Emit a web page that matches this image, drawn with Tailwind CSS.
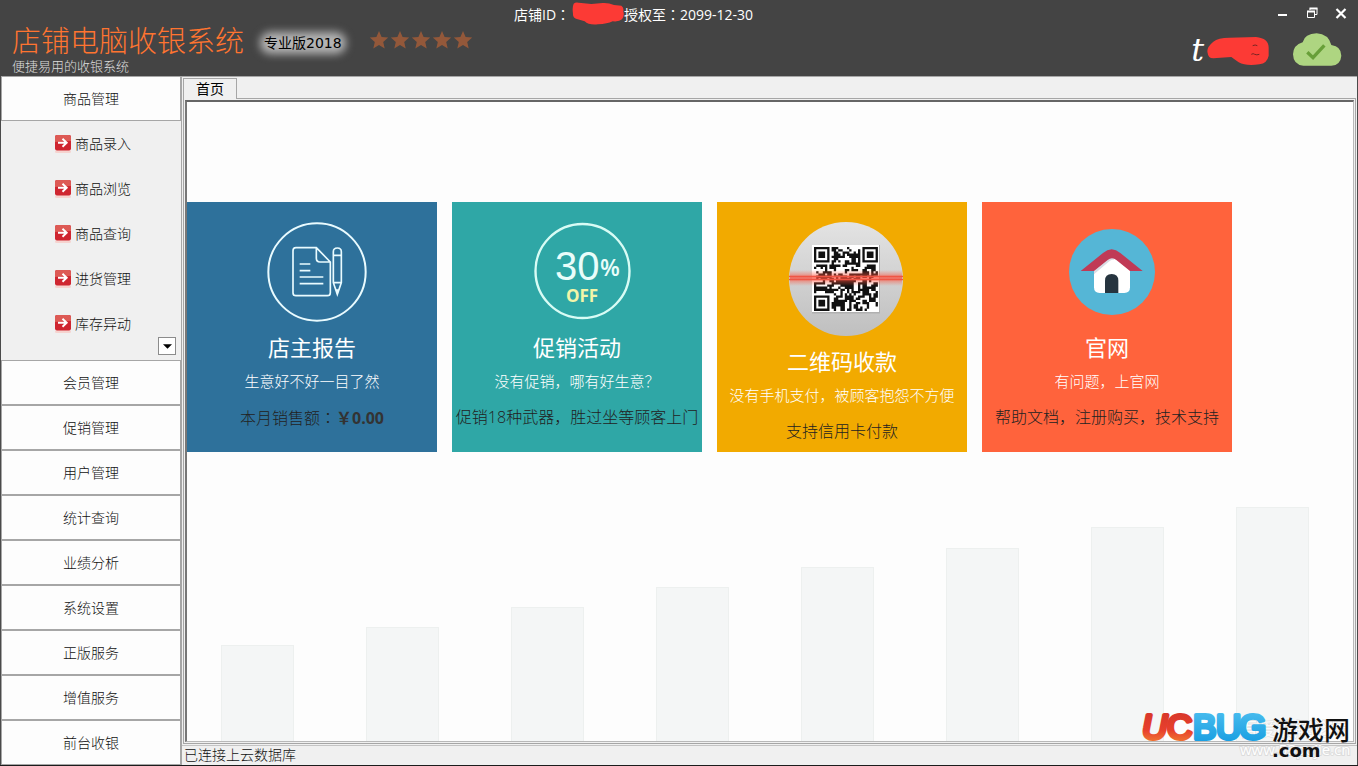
<!DOCTYPE html>
<html lang="zh-CN">
<head>
<meta charset="utf-8">
<meta name="viewport" content="width=device-width, initial-scale=1">
<title>店铺电脑收银系统</title>
<script src="https://cdn.jsdelivr.net/npm/@tailwindcss/browser@4"></script>
</head>
<body class="flex min-h-screen flex-col overflow-x-hidden border-b border-[#1c1c1c] bg-[#444444] text-sm font-light font-['Open_Sans','Noto_Sans_CJK_SC',sans-serif]">

<svg class="hidden" aria-hidden="true">
  <symbol id="star" viewBox="0 0 20 20"><path d="M10 1l2.6 6 6.6.6-5 4.400 1.500 6.500L10 15.100 4.300 18.500l1.500-6.500-5-4.400L7.400 7z" fill="#93583a"/></symbol>
  <symbol id="arrow" viewBox="0 0 16 20">
    <rect x="0" y="16" width="16" height="3" rx="1.500" fill="#f6d3cf"/>
    <rect x="0" y="1" width="16" height="15.500" rx="2" fill="#cf2631"/>
    <path d="M0 8V3q0-2 2-2h12q2 0 2 2v4q-8 0-16 1z" fill="#dd5a55"/>
    <path d="M3 8.800h8M7.500 4.800l4.200 4-4.200 4" fill="none" stroke="#fff" stroke-width="1.900"/>
  </symbol>
</svg>

<header class="flex h-[76px] shrink-0 items-start">
  <div class="flex h-full w-[514px] shrink-0 items-start pl-3">
    <div class="pt-6">
      <h1 class="text-[29px] leading-[34px] text-[#ff7430]">店铺电脑收银系统</h1>
      <p class="text-[13px] leading-4 text-[#dddddd]">便捷易用的收银系统</p>
    </div>
    <div class="relative ml-5 mt-8 font-['DejaVu_Sans','Noto_Sans_CJK_SC',sans-serif] leading-[22px] font-normal text-black">
      <span class="absolute -inset-x-1 inset-y-0 rounded-[10px] bg-[#b4b4b4] blur-[4px]"></span>
      <span class="relative">专业版2018</span>
    </div>
    <div class="ml-[27px] mt-[30px] flex gap-px" role="img" aria-label="五星">
      <svg class="size-5"><use href="#star"/></svg><svg class="size-5"><use href="#star"/></svg><svg class="size-5"><use href="#star"/></svg><svg class="size-5"><use href="#star"/></svg><svg class="size-5"><use href="#star"/></svg>
    </div>
  </div>
  <p class="flex items-start pt-1 leading-5 font-normal whitespace-nowrap text-white">
    <span>店铺ID<span lang="zh-TW" class="font-['Noto_Sans_CJK_TC']">：</span></span>
    <svg class="-mt-0.5 ml-0.5 h-[23px] w-[52px]" viewBox="0 0 156 69" aria-hidden="true"><path d="M5 5Q10 0 20 2L58 6 92 3Q110 2 126 9L148 11Q156 16 154 28 158 44 150 52 142 60 122 58 106 66 78 67 50 70 38 58L12 50Q2 47 3 35 0 16 5 5z" fill="#fc3a35"/></svg>
    <span>授权至<span lang="zh-TW" class="font-['Noto_Sans_CJK_TC']">：</span>2099-12-30</span>
  </p>
  <div class="ml-auto flex shrink-0 flex-col items-end">
    <div class="flex gap-[13px] pr-[9px] pt-1">
      <button aria-label="最小化"><svg class="size-4" viewBox="0 0 16 16"><path d="M3 11h9" stroke="#fff" stroke-width="2"/></svg></button>
      <button aria-label="还原"><svg class="size-4" viewBox="0 0 16 16" fill="none" stroke="#fff"><path d="M6 6V4.500h7v6h-2M3.500 7.500h7v6h-7z"/><path d="M5.500 4.500h8M3 7.500h8" stroke-width="2"/></svg></button>
      <button aria-label="关闭"><svg class="size-4" viewBox="0 0 16 16"><path d="M3.500 5l9 9M12.500 5l-9 9" stroke="#fff" stroke-width="2.200"/></svg></button>
    </div>
    <div class="flex items-center pr-4 pt-[13px]">
      <span class="mr-0.5 font-['DejaVu_Serif',serif] text-[32px] leading-8 text-white italic">t</span>
      <svg class="h-[30px] w-[64px]" viewBox="0 0 192 90" aria-hidden="true"><path d="M5 54Q0 38 22 20 36 8 70 8L150 6Q188 10 188 38V62Q184 84 160 88 120 94 98 82 84 72 76 66L22 70Q6 70 5 54z" fill="#fc3a35"/><path d="M140 32q8-4 14 0M136 58q6-4 10 0 6 3 14 0" fill="none" stroke="#7a2422" stroke-width="3"/></svg>
      <svg class="ml-[22px] h-[34px] w-[50px]" viewBox="396 100 150 102" role="img" aria-label="云同步正常"><path d="M430 198Q400 196 399 164 400 136 428 128 434 102 470 101 505 103 514 136 544 140 544 168 542 196 514 198z" fill="#aed581"/><path d="M442 158l17 16 34-37" fill="none" stroke="#689f38" stroke-width="10"/></svg>
    </div>
  </div>
</header>

<div class="flex flex-1 bg-[#f0f0f0] border-l border-r border-[#4a4a4a]">
  <nav class="flex w-[181px] shrink-0 flex-col border-r border-[#a6a6a6] text-[#111111]">
    <button class="h-[45px] border border-[#a6a6a6] bg-[#fdfdfd]">商品管理</button>
    <div class="relative flex-1">
      <a href="#" class="flex h-[45px] items-center gap-1 pl-[54px]"><svg class="h-5 w-4"><use href="#arrow"/></svg>商品录入</a>
      <a href="#" class="flex h-[45px] items-center gap-1 pl-[54px]"><svg class="h-5 w-4"><use href="#arrow"/></svg>商品浏览</a>
      <a href="#" class="flex h-[45px] items-center gap-1 pl-[54px]"><svg class="h-5 w-4"><use href="#arrow"/></svg>商品查询</a>
      <a href="#" class="flex h-[45px] items-center gap-1 pl-[54px]"><svg class="h-5 w-4"><use href="#arrow"/></svg>进货管理</a>
      <a href="#" class="flex h-[45px] items-center gap-1 pl-[54px]"><svg class="h-5 w-4"><use href="#arrow"/></svg>库存异动</a>
      <button aria-label="更多" class="absolute right-[5px] bottom-[5px] flex size-[18px] items-center justify-center border border-[#8c8c8c] bg-white"><svg class="h-[5px] w-[9px]" viewBox="0 0 8 4"><path d="M0 0h8L4 4z"/></svg></button>
    </div>
    <button class="h-[45px] border border-[#a6a6a6] bg-[#fdfdfd]">会员管理</button>
    <button class="h-[45px] border border-[#a6a6a6] bg-[#fdfdfd]">促销管理</button>
    <button class="h-[45px] border border-[#a6a6a6] bg-[#fdfdfd]">用户管理</button>
    <button class="h-[45px] border border-[#a6a6a6] bg-[#fdfdfd]">统计查询</button>
    <button class="h-[45px] border border-[#a6a6a6] bg-[#fdfdfd]">业绩分析</button>
    <button class="h-[45px] border border-[#a6a6a6] bg-[#fdfdfd]">系统设置</button>
    <button class="h-[45px] border border-[#a6a6a6] bg-[#fdfdfd]">正版服务</button>
    <button class="h-[45px] border border-[#a6a6a6] bg-[#fdfdfd]">增值服务</button>
    <button class="h-[45px] border border-[#a6a6a6] bg-[#fdfdfd]">前台收银</button>
  </nav>

  <div class="flex min-w-0 flex-1 flex-col border-t border-[#a6a6a6]">
    <div class="flex h-[21px] items-end pl-px">
      <button class="relative z-10 -mb-px h-[21px] w-[54px] border border-b-0 border-[#a6a6a6] bg-[#f0f0f0] leading-5 font-normal text-black">首页</button>
    </div>
    <main class="mx-px flex flex-1 flex-col border border-[#a6a6a6] p-px">
      <div class="flex flex-1 flex-col border-t-2 border-r border-b border-l-2 border-t-[#666666] border-r-[#b8b8b8] border-b-[#b8b8b8] border-l-[#777777] bg-[#fdfdfd]">
        <div class="flex gap-[15px] pt-[100px] text-center text-white">
          <a href="#" class="h-[250px] w-[250px] shrink-0 bg-[#2e719b] pt-5">
            <svg class="mx-auto block h-[100px] w-[110px] pl-[10px]" viewBox="243 66 300 300" fill="none" stroke="#e9fbff" stroke-width="6">
              <circle cx="393" cy="216" r="146"/>
              <path d="M391 143h-61q-9 0-9 9v126q0 9 9 9h94q9 0 9-9v-92zM391 143v32q0 11 11 11h31M341 192h32M341 212h32M341 231h71M341 251h71" stroke-width="5"/>
              <path d="M442 248v-93q0-11 12-11t12 11v93l-12 35zM442 166h24M442 248h24" stroke-width="5"/><path d="M449 268h10l-5 17z" fill="#e9fbff" stroke="none"/>
            </svg>
            <h2 class="mt-2 text-[22px] leading-[34px] font-normal">店主报告</h2>
            <p class="mt-[5px] text-[15px] leading-6">生意好不好一目了然</p>
            <p class="mt-3 text-base leading-6 text-[#222222]">本月销售额<span lang="zh-TW" class="font-['Noto_Sans_CJK_TC']">：</span><b class="font-bold text-[#333333]">￥0.00</b></p>
          </a>
          <a href="#" class="h-[250px] w-[250px] shrink-0 bg-[#2fa7a6] pt-5">
            <svg class="mx-auto block h-[100px] w-[110px] pl-[10px]" viewBox="0 0 100 100" fill="#e9fdfa">
              <circle cx="50.500" cy="49" r="47" fill="none" stroke="#d8fcf5" stroke-width="2.400"/>
              <text x="23" y="58" font-family="Liberation Sans" font-weight="400" font-size="40">30</text>
              <text x="68" y="54" font-family="Open Sans" font-weight="600" font-size="23">%</text>
              <text x="34" y="80" font-family="Open Sans" font-weight="700" font-size="17" fill="#f2f5a9">OFF</text>
            </svg>
            <h2 class="mt-2 text-[22px] leading-[34px] font-normal">促销活动</h2>
            <p class="mt-[5px] text-[15px] leading-6">没有促销，哪有好生意？</p>
            <p class="mt-3 text-base leading-6 whitespace-nowrap text-[#222222]">促销18种武器，胜过坐等顾客上门</p>
          </a>
          <a href="#" class="h-[250px] w-[250px] shrink-0 bg-[#f2aa00] pt-5">
            <svg class="mx-auto block h-[114px] w-[122px] pl-2" viewBox="0 0 114 114">
              <defs>
                <linearGradient id="disc" x1="0" y1="0" x2="0" y2="1"><stop offset="0" stop-color="#e3e3e3"/><stop offset="1" stop-color="#bfbfbf"/></linearGradient>
                <linearGradient id="glow" x1="0" y1="0" x2="0" y2="1"><stop offset="0" stop-color="#ff5a40" stop-opacity="0"/><stop offset=".5" stop-color="#ff4a35" stop-opacity=".7"/><stop offset="1" stop-color="#ff5a40" stop-opacity="0"/></linearGradient>
              </defs>
              <circle cx="57" cy="57" r="57" fill="url(#disc)"/>
              <rect x="23" y="23" width="68" height="68.500" fill="#b0b0b0"/>
              <rect x="23" y="23" width="67" height="67" fill="#fff"/>
              <path id="qr" transform="translate(25 25) scale(2.200)" fill="#111"/>
              <rect x="1" y="48" width="112" height="16" fill="url(#glow)"/>
              <path d="M0 54.500h114M0 57.500h114" stroke="#ef5544" stroke-width="1.300"/>
            </svg>
            <h2 class="mt-2 text-[22px] leading-[34px] font-normal">二维码收款</h2>
            <p class="mt-[5px] text-[15px] leading-6 whitespace-nowrap">没有手机支付，被顾客抱怨不方便</p>
            <p class="mt-3 text-base leading-6 text-[#222222]">支持信用卡付款</p>
          </a>
          <a href="#" class="h-[250px] w-[250px] shrink-0 bg-[#ff633c] pt-5">
            <svg class="mx-auto block h-[100px] w-[110px] pl-[10px]" viewBox="246 66 300 300">
              <circle cx="396" cy="216" r="129" fill="#55b6d6"/>
              <path d="M342 209l54-42 54 42v53q0 17-17 17h-74q-17 0-17-17z" fill="#fff"/>
              <path d="M342 214v-9l54-40 6 15q-7-3-14 4l-46 39z" fill="#d9dce4"/>
              <path d="M302 213l67-54q26-22 52 0l67 54h-38l-41-33q-13-11-26 0l-41 33z" fill="#c03a56"/>
              <path d="M375 279v-37q0-20 20-20t20 20v37z" fill="#26343f"/>
            </svg>
            <h2 class="mt-2 text-[22px] leading-[34px] font-normal">官网</h2>
            <p class="mt-[5px] text-[15px] leading-6">有问题，上官网</p>
            <p class="mt-3 text-base leading-6 whitespace-nowrap text-[#222222]">帮助文档，注册购买，技术支持</p>
          </a>
        </div>
        <div class="mt-auto flex items-end gap-[72px] pl-[34px]" aria-hidden="true">
          <div class="w-[73px] shrink-0 border border-b-0 border-[#edf0ef] bg-[#f4f6f6]" style="height:96px"></div>
          <div class="w-[73px] shrink-0 border border-b-0 border-[#edf0ef] bg-[#f4f6f6]" style="height:114px"></div>
          <div class="w-[73px] shrink-0 border border-b-0 border-[#edf0ef] bg-[#f4f6f6]" style="height:134px"></div>
          <div class="w-[73px] shrink-0 border border-b-0 border-[#edf0ef] bg-[#f4f6f6]" style="height:154px"></div>
          <div class="w-[73px] shrink-0 border border-b-0 border-[#edf0ef] bg-[#f4f6f6]" style="height:174px"></div>
          <div class="w-[73px] shrink-0 border border-b-0 border-[#edf0ef] bg-[#f4f6f6]" style="height:193px"></div>
          <div class="w-[73px] shrink-0 border border-b-0 border-[#edf0ef] bg-[#f4f6f6]" style="height:214px"></div>
          <div class="w-[73px] shrink-0 border border-b-0 border-[#edf0ef] bg-[#f4f6f6]" style="height:234px"></div>
        </div>
      </div>
    </main>
    <footer class="mt-px h-5 border-t border-[#c4c4c4] pl-0.5 leading-[18px] text-[#111111]">已连接上云数据库</footer>
  </div>
</div>

<svg class="absolute right-1 bottom-0 h-[60px] w-[212px]" viewBox="0 0 212 60" role="img" aria-label="UCBUG 游戏网 .com">
  <defs>
    <linearGradient id="red" x1="0" y1="0" x2="0" y2="1"><stop offset="0" stop-color="#d3352b"/><stop offset=".6" stop-color="#e8402c"/><stop offset="1" stop-color="#f28a35"/></linearGradient>
    <linearGradient id="blue" x1="0" y1="0" x2="0" y2="1"><stop offset="0" stop-color="#4fc0f0"/><stop offset="1" stop-color="#149be0"/></linearGradient>
  </defs>
  <g fill="#ffffff" stroke="#dcdcdc" stroke-width="2" paint-order="stroke" font-weight="400">
    <text x="98" y="30" font-family="Noto Sans CJK SC" font-size="18" opacity=".6">吾爱破解论坛</text>
    <text x="98" y="49" font-family="Open Sans" font-size="15">www.52pojie.cn</text>
  </g>
  <g font-family="Liberation Sans" font-weight="400" font-size="35" stroke-width="4" stroke-linejoin="round" stroke-linecap="round">
    <text x="0" y="33" font-style="italic" fill="url(#red)" stroke="url(#red)">U</text>
    <text x="25" y="33" fill="url(#red)" stroke="url(#red)">C</text>
    <text x="51" y="33" fill="url(#blue)" stroke="url(#blue)">B</text>
    <text x="74" y="33" fill="url(#blue)" stroke="url(#blue)">U</text>
    <text x="97" y="33" fill="url(#blue)" stroke="url(#blue)">G</text>
  </g>
  <text x="130" y="34" font-family="Noto Sans CJK SC" font-weight="500" font-size="26" fill="#111">游戏网</text>
  <text x="130" y="51" font-family="DejaVu Sans" font-weight="700" font-size="18" fill="#111">.com</text>
</svg>

<script>
  // Fill the payment code with finder squares and data modules on a 29 x 29 grid.
  const N = 29;
  let seed = 20181, d = '';
  const rand = () => {
    seed = (seed + 0x6D2B79F5) | 0;
    let t = Math.imul(seed ^ (seed >>> 15), 1 | seed);
    t = (t + Math.imul(t ^ (t >>> 7), 61 | t)) ^ t;
    return ((t ^ (t >>> 14)) >>> 0) / 4294967296;
  };
  const noise = Array.from({ length: (N + 1) * (N + 1) }, rand);
  const clump = (x, y) => noise[y * N + x] * 2 + noise[y * N + x + 1] + noise[(y + 1) * N + x];
  const finder = (x, y) => {
    const cx = x < 8 ? 3 : x > N - 9 ? N - 4 : null;
    const cy = y < 8 ? 3 : y > N - 9 ? N - 4 : null;
    if (cx === null || cy === null || (cx > 3 && cy > 3)) return null;
    const r = Math.max(Math.abs(x - cx), Math.abs(y - cy));
    return r === 3 || r < 2;
  };
  for (let y = 0; y < N; y++) for (let x = 0; x < N; x++) {
    const f = finder(x, y);
    const on = f === null ? clump(x, y) > 1.95 : f;
    if (on) d += `M${x} ${y}h1.05v1.05h-1.05z`;
  }
  document.getElementById('qr').setAttribute('d', d);
</script>
</body>
</html>
